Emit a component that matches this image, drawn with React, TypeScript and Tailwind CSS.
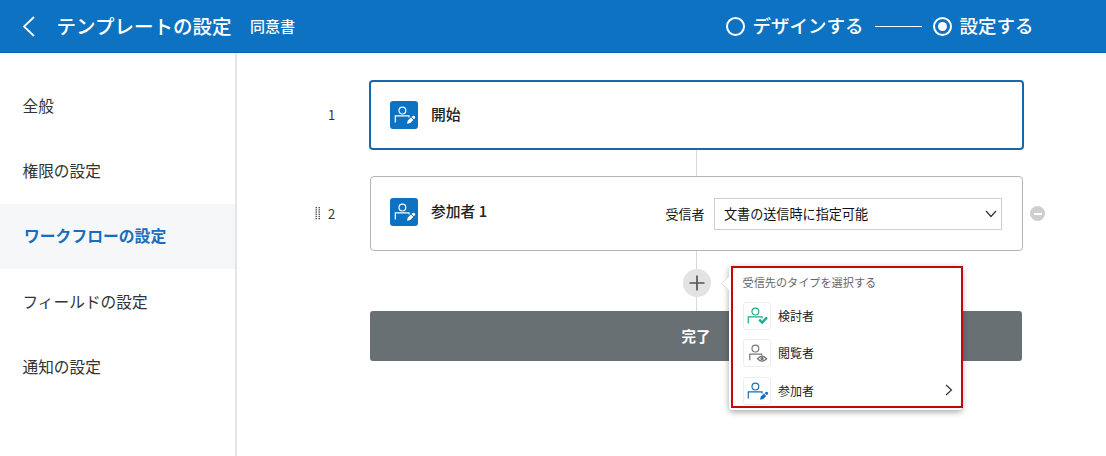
import type { ReactNode } from "react";

type Badge = "pencil" | "check" | "eye";

function PersonIcon({ badge }: { badge: Badge }) {
  return (
    <svg viewBox="0 0 28 28" className="h-7 w-7 shrink-0" fill="none" stroke="currentColor" strokeWidth="1.2">
      <circle cx="12.4" cy="9.6" r="3.4" />
      {badge === "eye" ? (
        <path d="M6.8 21.2V15.2H18.6V16.5" />
      ) : (
        <path d="M5.3 21.5V14.9H19V16.5" />
      )}
      {badge === "pencil" && (
        <path
          d="M17 22.8L17.8 19.6L21 16.6L23.3 18.9L20.2 21.9ZM21.6 16L22.8 14.9Q23.7 14.4 24.4 15.1L25 15.8Q25.5 16.6 24.9 17.3L23.9 18.3Z"
          fill="currentColor"
          stroke="none"
        />
      )}
      {badge === "check" && <path d="M16.2 17.6L19.2 20.6L24 15.4" strokeWidth="2.4" />}
      {badge === "eye" && (
        <>
          <path d="M14.6 19.7Q19 14.9 23.6 19.7Q19 24.5 14.6 19.7Z" strokeWidth="1.4" fill="white" />
          <circle cx="19.1" cy="19.7" r="1.7" fill="currentColor" stroke="none" />
        </>
      )}
    </svg>
  );
}

function StepIcon() {
  return (
    <span className="flex size-7 shrink-0 items-center justify-center rounded-[3px] bg-[#0e72c2] text-white">
      <PersonIcon badge="pencil" />
    </span>
  );
}

function Chevron({ className, d, w, h }: { className?: string; d: string; w: number; h: number }) {
  return (
    <svg width={w} height={h} viewBox={`0 0 ${w} ${h}`} className={className} fill="none" stroke="currentColor">
      <path d={d} />
    </svg>
  );
}

const menu = ["全般", "権限の設定", "ワークフローの設定", "フィールドの設定", "通知の設定"];

const types: { label: string; badge: Badge; color: string }[] = [
  { label: "検討者", badge: "check", color: "text-[#1eab8e]" },
  { label: "閲覧者", badge: "eye", color: "text-[#777777]" },
  { label: "参加者", badge: "pencil", color: "text-[#1a6dbb]" },
];

function Header() {
  return (
    <header className="flex h-[53px] shrink-0 items-center border-b border-[#0b65ae] bg-[#0e72c2] pl-[22px] text-white">
      <Chevron w={13} h={21} d="M12 1L2 10.5L12 20" className="[stroke-width:1.8]" />
      <h1 className="ml-[21.5px] w-[193.5px] whitespace-nowrap text-[19.5px] font-medium">テンプレートの設定</h1>
      <span className="whitespace-nowrap pt-px text-[15px] font-medium">同意書</span>
      <div className="ml-auto mr-[72.5px] flex items-center whitespace-nowrap text-[18.5px] font-medium">
        <span className="mt-px size-[19px] rounded-full border-2 border-white" />
        <span className="ml-[7px]">デザインする</span>
        <span className="ml-3 h-px w-[47px] bg-white" />
        <span className="ml-[11px] mt-px flex size-[19px] items-center justify-center rounded-full border-2 border-white">
          <span className="size-[9px] rounded-full bg-white" />
        </span>
        <span className="ml-[7px]">設定する</span>
      </div>
    </header>
  );
}

function Row({ number, handle, children }: { number: string; handle?: boolean; children: ReactNode }) {
  return (
    <div className="flex items-center">
      <div className="flex w-[133px] shrink-0 items-center pl-[78px]">
        <span className="flex w-[13px]">
          {handle && (
            <svg width="6" height="13" viewBox="0 0 6 13" fill="#555">
              {[0, 2.2, 4.4, 6.6, 8.8, 11].map((y) => (
                <g key={y}>
                  <rect x="0.5" y={y} width="1.5" height="1.3" />
                  <rect x="3.5" y={y} width="1.5" height="1.3" />
                </g>
              ))}
            </svg>
          )}
        </span>
        <span className="text-[13px] text-[#333]">{number}</span>
      </div>
      {children}
    </div>
  );
}

function TypePopover() {
  return (
    <div className="absolute left-[34px] top-[-17px] z-10 h-[144px] w-[233px] rounded-[3px] bg-white pl-0.5 shadow-[0_2px_6px_rgba(0,0,0,0.35)]">
      <svg className="absolute -left-[9px] top-[9px]" width="11" height="17" viewBox="0 0 11 17">
        <path d="M10 0.5L1.5 8.5L10 16.5" fill="white" stroke="#dedede" />
        <path d="M9.5 0H11V17H9.5Z" fill="white" />
      </svg>
      <div className="relative flex h-[142px] w-[232px] flex-col border-2 border-[#c80508] bg-white pl-[10px]">
        <p className="mt-[6px] h-4 whitespace-nowrap text-[11.15px] leading-4 text-[#666]">受信先のタイプを選択する</p>
        <ul className="mt-[12px]">
          {types.map((t) => (
            <li key={t.label} className="flex h-[37.3px] items-start">
              <span className={`flex size-7 shrink-0 items-center justify-center rounded-[3px] border border-[#ededed] ${t.color}`}>
                <PersonIcon badge={t.badge} />
              </span>
              <span className="ml-[7.5px] text-[12px] leading-7 text-[#222]">{t.label}</span>
              {t.badge === "pencil" && (
                <Chevron w={8} h={12} d="M1 1L6.5 6L1 11" className="ml-auto mr-[8px] mt-[7px] text-[#333] [stroke-width:1.2]" />
              )}
            </li>
          ))}
        </ul>
      </div>
    </div>
  );
}

export default function App() {
  return (
    <div className="flex h-[456px] w-[1106px] flex-col overflow-hidden bg-white font-['Noto_Sans_CJK_JP',sans-serif]">
      <Header />
      <div className="flex min-h-0 flex-1">
        <nav className="w-[237px] shrink-0 border-r-2 border-[#e6e6e6] pt-5">
          {menu.map((m) =>
            m === "ワークフローの設定" ? (
              <div key={m} className="flex h-[65.3px] items-center bg-[#f5f7f9] pl-6 text-[15.8px] font-bold text-[#1a6dbb]">{m}</div>
            ) : (
              <div key={m} className="flex h-[65.3px] items-center pl-[22.5px] text-[15.7px] text-[#333]">{m}</div>
            ),
          )}
        </nav>
        <main className="flex-1 pt-[27px]">
          <Row number="1">
            <section className="-ml-px flex h-[70px] w-[655px] items-center rounded-[4px] border-2 border-[#1767ad] pb-px pl-[19px]">
              <StepIcon />
              <span className="ml-[13px] text-[14.8px] font-medium text-[#222]">開始</span>
            </section>
          </Row>
          <div className="ml-[459px] h-[26px] w-px bg-[#d8d8d8]" />
          <Row number="2" handle>
            <section className="flex h-[75px] w-[653px] items-center rounded-[4px] border border-[#b5b5b5] pl-[19px]">
              <div className="-mt-1 flex items-center">
                <StepIcon />
                <span className="ml-[13px] text-[14.8px] font-medium text-[#222]">参加者 1</span>
              </div>
              <span className="ml-auto text-[13px] text-[#111]">受信者</span>
              <div className="ml-[9.5px] mr-5 flex h-8 w-[288px] items-center justify-between border border-[#cfcfcf] pl-[9px] pr-1 text-[13.1px] text-[#111]">
                <span>文書の送信時に指定可能</span>
                <Chevron w={12} h={8} d="M1 1L6 6.5L11 1" className="text-[#333] [stroke-width:1.2]" />
              </div>
            </section>
            <span className="ml-[7px] flex size-[15px] items-center justify-center rounded-full bg-[#cecece]">
              <span className="h-0.5 w-2 bg-white" />
            </span>
          </Row>
          <div className="ml-[445px] flex w-[29px] flex-col items-center">
            <div className="h-[18px] w-px bg-[#d8d8d8]" />
            <div className="relative flex size-7 items-center justify-center rounded-full bg-[#e3e3e3]">
              <svg width="16" height="16" viewBox="0 0 16 16" stroke="#555" strokeWidth="1.7">
                <path d="M8 0.5V15.5M0.5 8H15.5" />
              </svg>
              <div className="absolute left-[12px] top-[14px] size-0">
                <TypePopover />
              </div>
            </div>
            <div className="h-[14px] w-px bg-[#d8d8d8]" />
          </div>
          <div className="ml-[133px] flex h-[50px] w-[652px] items-center justify-center rounded-[3px] bg-[#687073] pb-px text-[14.5px] font-bold text-white">
            完了
          </div>
        </main>
      </div>
    </div>
  );
}
